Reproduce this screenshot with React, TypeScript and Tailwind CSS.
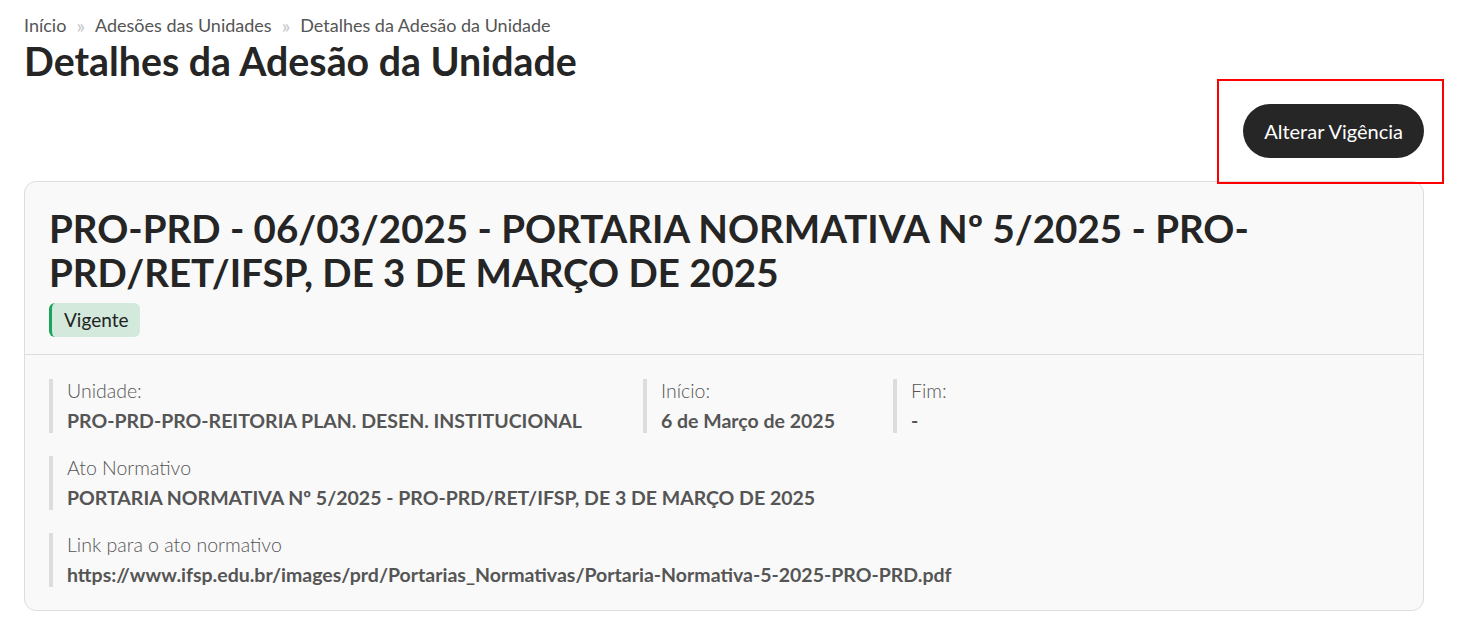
import React from "react";

function Field({ label, value, className = "" }: { label: string; value: string; className?: string }) {
  return (
    <div className={`border-l-4 border-[#dddddd] pl-[14px] ${className}`}>
      <div className="text-[19.5px] font-light leading-[24px] text-[#555555]">{label}</div>
      <div className="mt-[6px] text-[19.5px] font-bold leading-[24px] text-[#555555]">{value}</div>
    </div>
  );
}

export default function App() {
  return (
    <div className="min-h-[642px] bg-white px-[24px] pt-[13px] font-['Lato','Liberation_Sans',sans-serif] text-[#222222]">
      <nav className="flex items-center text-[18px] leading-[24px] text-[#555555]">
        <span>Início</span>
        <span className="mx-[10px] text-[20px] text-[#c4c4c4]">»</span>
        <span>Adesões das Unidades</span>
        <span className="mx-[10px] text-[20px] text-[#c4c4c4]">»</span>
        <span>Detalhes da Adesão da Unidade</span>
      </nav>
      <h1 className="mt-[0px] text-[39.3px] font-bold leading-[48px] text-[#252525]">Detalhes da Adesão da Unidade</h1>
      <div className="mt-[19px] flex w-[1400px] justify-end">
        <div className="relative">
          <button className="h-[54px] rounded-full bg-[#262626] px-[21px] text-[20px] text-white">Alterar Vigência</button>
          <div className="pointer-events-none absolute -bottom-[26px] -left-[26px] -right-[20px] -top-[25px] border-2 border-[#ff0000]" />
        </div>
      </div>
      <div className="mt-[23px] w-[1400px] rounded-[12px] border border-[#dddddd] bg-[#f9f9f9]">
        <div className="border-b border-[#dddddd] px-[24px] pb-[17px] pt-[24px]">
          <h2 className="text-[38.5px] font-bold leading-[44px] text-[#252525]">
            PRO-PRD - 06/03/2025 - PORTARIA NORMATIVA Nº 5/2025 - PRO-PRD/RET/IFSP, DE 3 DE MARÇO DE 2025
          </h2>
          <div className="mt-[9px] flex h-[34px] w-fit items-center rounded-[6px] border-l-[3px] border-[#1aa35a] bg-[#d2e9dc] px-[12px] text-[19px] text-[#222222]">
            Vigente
          </div>
        </div>
        <div className="px-[24px] pb-[23px] pt-[24px]">
          <div className="flex">
            <Field className="w-[594px]" label="Unidade:" value="PRO-PRD-PRO-REITORIA PLAN. DESEN. INSTITUCIONAL" />
            <Field className="w-[250px]" label="Início:" value="6 de Março de 2025" />
            <Field label="Fim:" value="-" />
          </div>
          <Field className="mt-[23px]" label="Ato Normativo" value="PORTARIA NORMATIVA Nº 5/2025 - PRO-PRD/RET/IFSP, DE 3 DE MARÇO DE 2025" />
          <Field className="mt-[23px]" label="Link para o ato normativo" value="https://www.ifsp.edu.br/images/prd/Portarias_Normativas/Portaria-Normativa-5-2025-PRO-PRD.pdf" />
        </div>
      </div>
    </div>
  );
}
